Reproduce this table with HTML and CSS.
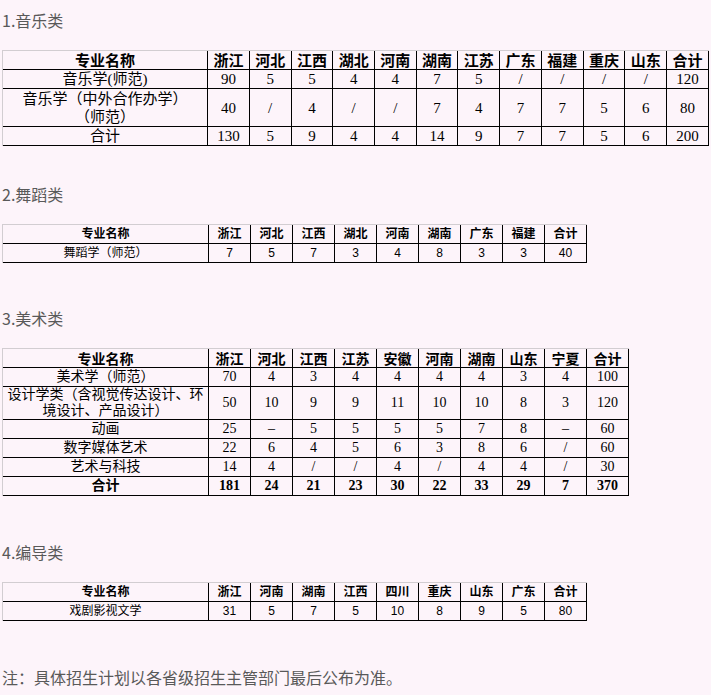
FILE: index.html
```html
<!DOCTYPE html>
<html lang="zh-CN">
<head>
<meta charset="utf-8">
<title>招生计划</title>
<link rel="stylesheet" href="styles.css">
</head>
<body>
<section class="sec first">
  <h2 class="title">1.音乐类</h2>
  <table class="grid big">
    <tr class="head">
      <td class="name">专业名称</td><td>浙江</td><td>河北</td><td>江西</td><td>湖北</td><td>河南</td><td>湖南</td><td>江苏</td><td>广东</td><td>福建</td><td>重庆</td><td>山东</td><td class="last">合计</td>
    </tr>
    <tr><td>音乐学(师范)</td><td>90</td><td>5</td><td>5</td><td>4</td><td>4</td><td>7</td><td>5</td><td>/</td><td>/</td><td>/</td><td>/</td><td>120</td></tr>
    <tr class="two"><td>音乐学（中外合作办学）<br>（师范）</td><td>40</td><td>/</td><td>4</td><td>/</td><td>/</td><td>7</td><td>4</td><td>7</td><td>7</td><td>5</td><td>6</td><td>80</td></tr>
    <tr><td>合计</td><td>130</td><td>5</td><td>9</td><td>4</td><td>4</td><td>14</td><td>9</td><td>7</td><td>7</td><td>5</td><td>6</td><td>200</td></tr>
  </table>
</section>

<section class="sec s2">
  <h2 class="title">2.舞蹈类</h2>
  <table class="grid small">
    <tr class="head">
      <td class="name">专业名称</td><td>浙江</td><td>河北</td><td>江西</td><td>湖北</td><td>河南</td><td>湖南</td><td>广东</td><td>福建</td><td>合计</td>
    </tr>
    <tr><td>舞蹈学（师范）</td><td>7</td><td>5</td><td>7</td><td>3</td><td>4</td><td>8</td><td>3</td><td>3</td><td>40</td></tr>
  </table>
</section>

<section class="sec s3">
  <h2 class="title">3.美术类</h2>
  <table class="grid mid">
    <tr class="head">
      <td class="name">专业名称</td><td>浙江</td><td>河北</td><td>江西</td><td>江苏</td><td>安徽</td><td>河南</td><td>湖南</td><td>山东</td><td>宁夏</td><td>合计</td>
    </tr>
    <tr><td>美术学（师范）</td><td>70</td><td>4</td><td>3</td><td>4</td><td>4</td><td>4</td><td>4</td><td>3</td><td>4</td><td>100</td></tr>
    <tr class="two"><td>设计学类（含视觉传达设计、环<br>境设计、产品设计）</td><td>50</td><td>10</td><td>9</td><td>9</td><td>11</td><td>10</td><td>10</td><td>8</td><td>3</td><td>120</td></tr>
    <tr><td>动画</td><td>25</td><td>–</td><td>5</td><td>5</td><td>5</td><td>5</td><td>7</td><td>8</td><td>–</td><td>60</td></tr>
    <tr><td>数字媒体艺术</td><td>22</td><td>6</td><td>4</td><td>5</td><td>6</td><td>3</td><td>8</td><td>6</td><td>/</td><td>60</td></tr>
    <tr><td>艺术与科技</td><td>14</td><td>4</td><td>/</td><td>/</td><td>4</td><td>/</td><td>4</td><td>4</td><td>/</td><td>30</td></tr>
    <tr class="total"><td>合计</td><td>181</td><td>24</td><td>21</td><td>23</td><td>30</td><td>22</td><td>33</td><td>29</td><td>7</td><td>370</td></tr>
  </table>
</section>

<section class="sec s4">
  <h2 class="title">4.编导类</h2>
  <table class="grid small">
    <tr class="head">
      <td class="name">专业名称</td><td>浙江</td><td>河南</td><td>湖南</td><td>江西</td><td>四川</td><td>重庆</td><td>山东</td><td>广东</td><td>合计</td>
    </tr>
    <tr><td>戏剧影视文学</td><td>31</td><td>5</td><td>7</td><td>5</td><td>10</td><td>8</td><td>9</td><td>5</td><td>80</td></tr>
  </table>
</section>

<p class="note">注：具体招生计划以各省级招生主管部门最后公布为准。</p>
</body>
</html>
```

FILE: styles.css
```css
html {
  overflow-x: hidden;
}

body {
  margin: 0;
  padding: 10px 2px 0;
  background: #fdf4fa;
  font-family: "Noto Sans CJK SC", sans-serif;
  color: #000;
}

.sec.first {
  margin-top: 0;
}

.sec.s2 {
  margin-top: 38px;
}

.sec.s3 {
  margin-top: 45px;
}

.sec.s4 {
  margin-top: 46px;
}

.title {
  margin: 0 0 20px;
  font-size: 16px;
  line-height: 20px;
  font-weight: normal;
  color: #595959;
}

.grid {
  border-collapse: separate;
  border-spacing: 0;
  table-layout: fixed;
  border-top: 1px solid #d2cdd1;
  border-left: 1px solid #d2cdd1;
}

.grid td {
  box-sizing: border-box;
  width: 42px;
  height: 19px;
  padding: 0;
  border-right: 1px solid #000;
  border-bottom: 1px solid #000;
  text-align: center;
  vertical-align: middle;
  white-space: nowrap;
}

.grid td.name {
  width: 206px;
}

.grid td.last {
  width: 40px;
}

.grid .head td {
  font-weight: bold;
}

.big {
  font-family: "Liberation Serif", "Noto Sans CJK SC", serif;
  font-size: 15px;
  line-height: 18px;
}

.big .head td {
  font-family: "Noto Sans CJK SC", sans-serif;
  font-size: 15px;
}

.big .two td {
  height: 38px;
}

.mid {
  font-family: "Liberation Serif", "Noto Sans CJK SC", serif;
  font-size: 14px;
  line-height: 16px;
}

.mid .head td {
  font-family: "Noto Sans CJK SC", sans-serif;
  font-size: 14px;
}

.mid .two td {
  height: 33px;
}

.mid .total td {
  font-weight: bold;
  font-size: 14px;
}

.small {
  font-family: "Liberation Sans", "Noto Sans CJK SC", sans-serif;
  font-size: 12px;
  line-height: 16px;
}

.small .head td {
  font-size: 12px;
}

.note {
  margin: 46px 0 0;
  font-size: 16px;
  line-height: 20px;
  color: #595959;
}
```
